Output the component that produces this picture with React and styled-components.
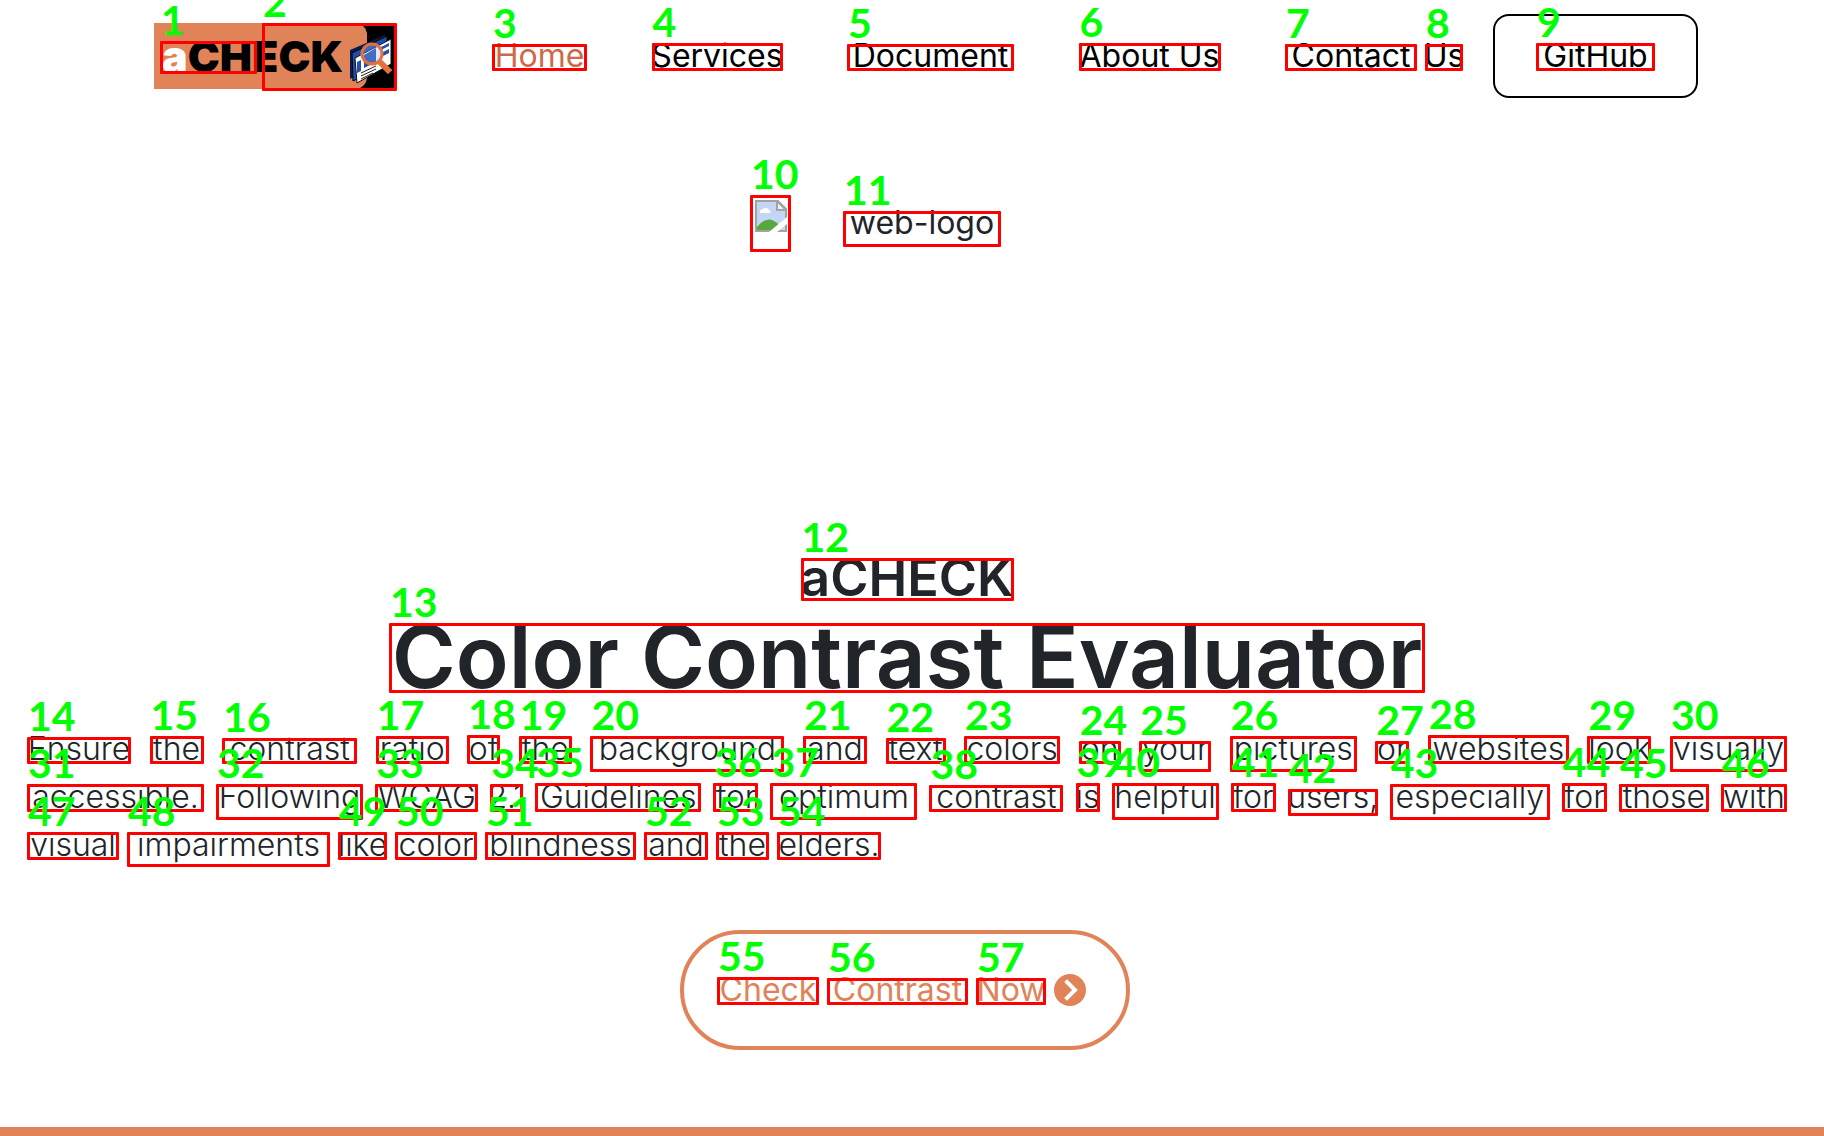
import React from "react";
import styled, { createGlobalStyle } from "styled-components";

const ORANGE = "#e08358";

const GlobalStyle = createGlobalStyle`
  * { box-sizing: border-box; }
  body {
    margin: 0;
    background: #ffffff;
    color: #212529;
    font-family: Inter, "Open Sans", sans-serif;
    font-size: 32px;
    line-height: 48px;
    overflow-x: hidden;
  }
  h1, h2, p { margin: 0; }
  a { color: inherit; text-decoration: none; }
`;

const Page = styled.div`
  display: flex;
  flex-direction: column;
`;

const Header = styled.header`
  display: flex;
  align-items: center;
  padding: 14px 126px 0 154px;
`;

const Logo = styled.a`
  position: relative;
  flex: none;
  display: flex;
  align-items: center;
  width: 242px;
  height: 66px;
  background: #000000;
`;

const LogoPlate = styled.span`
  display: flex;
  align-items: center;
  width: 213px;
  height: 100%;
  padding-left: 8px;
  border-radius: 0 12px 12px 0;
  background: ${ORANGE};
  color: #000000;
  font-size: 43px;
  font-weight: 900;
  white-space: nowrap;
`;

const LogoInitial = styled.span`
  color: #ffffff;
`;

const LogoArt = styled.svg`
  position: absolute;
  right: 4px;
  top: 12px;
  width: 44px;
  height: 50px;
`;

const Nav = styled.nav`
  flex: 1;
  display: flex;
  justify-content: space-between;
  margin: 0 30px 0 96px;
`;

const NavLink = styled.a`
  display: flex;
  gap: 8px;
  color: ${(p) => (p.$active ? "#cf6a48" : "#000000")};
`;

const GitHubButton = styled.button`
  display: flex;
  align-items: center;
  justify-content: center;
  width: 205px;
  height: 84px;
  padding: 0;
  border: 2px solid #000000;
  border-radius: 16px;
  background: transparent;
  color: #000000;
  font: inherit;
`;

const Main = styled.main`
  display: flex;
  flex-direction: column;
  align-items: center;
  padding: 101px 37px 77px 27px;
`;

const Banner = styled.div`
  display: flex;
  gap: 52px;
  width: 314px;
  height: 344px;
`;

const Subtitle = styled.h2`
  font-size: 52px;
  font-weight: 600;
  line-height: 70px;
`;

const Title = styled.h1`
  margin-bottom: 24px;
  font-size: 87px;
  font-weight: 600;
  line-height: 88px;
`;

const Intro = styled.p`
  align-self: stretch;
  font-weight: 300;
`;

const Line = styled.span`
  display: flex;
  justify-content: ${(p) => (p.$last ? "flex-start" : "space-between")};
  gap: ${(p) => (p.$last ? "8px" : "0")};
`;

const Word = styled.span`
  position: relative;
  display: flex;
  flex: none;
  justify-content: center;
  width: ${(p) => p.$w}px;
  white-space: nowrap;
`;

const Frame = styled.span`
  position: absolute;
  left: ${(p) => p.$left || 0}px;
  top: ${(p) => p.$top}px;
  width: ${(p) => (p.$w ? p.$w + "px" : "100%")};
  height: ${(p) => p.$h}px;
  border: 3px solid #ff0000;
  border-radius: 1px;
  z-index: 1;
`;

const Tag = styled.span`
  position: absolute;
  left: -2px;
  bottom: 100%;
  margin-bottom: 4px;
  color: #00ff00;
  font-family: Lato, sans-serif;
  font-size: 41px;
  font-weight: 700;
  line-height: 40px;
  white-space: nowrap;
`;

const Cta = styled.a`
  display: flex;
  align-items: center;
  gap: 8px;
  width: 450px;
  height: 120px;
  margin: 61px 4px 0 0;
  padding: 0 33px;
  border: 4px solid ${ORANGE};
  border-radius: 60px;
  color: ${ORANGE};
`;

const CtaIcon = styled.svg`
  flex: none;
  width: 32px;
  height: 32px;
`;

const BrokenIcon = styled.svg`
  width: 32px;
  height: 32px;
  margin-top: 1px;
`;

const Bar = styled.footer`
  height: 10px;
  background: ${ORANGE};
`;

function Marked({ n, w, top = 12, h = 28, children }) {
  return (
    <Word $w={w}>
      {children}
      <Frame $top={top} $h={h}>
        <Tag>{n}</Tag>
      </Frame>
    </Word>
  );
}

// [number, word, width, frame top, frame height]
const intro = [
  [
    [14, "Ensure", 104, 12, 27],
    [15, "the", 54, 11, 28],
    [16, "contrast", 135, 13, 26],
    [17, "ratio", 73, 11, 28],
    [18, "of", 33, 10, 29],
    [19, "the", 53, 11, 28],
    [20, "background", 194, 11, 36],
    [21, "and", 64, 11, 28],
    [22, "text", 60, 13, 26],
    [23, "colors", 96, 11, 28],
    [24, "on", 42, 16, 23],
    [25, "your", 72, 16, 31],
    [26, "pictures", 127, 11, 36],
    [27, "or", 34, 16, 23],
    [28, "websites", 141, 10, 29],
    [29, "look", 64, 11, 28],
    [30, "visually", 117, 11, 36],
  ],
  [
    [31, "accessible.", 177, 11, 28],
    [32, "Following", 147, 11, 36],
    [33, "WCAG", 103, 11, 28],
    [34, "2.1", 33, 11, 28],
    [35, "Guidelines", 166, 10, 29],
    [36, "for", 45, 10, 29],
    [37, "optimum", 147, 10, 37],
    [38, "contrast", 134, 12, 27],
    [39, "is", 24, 10, 29],
    [40, "helpful", 107, 10, 37],
    [41, "for", 45, 10, 29],
    [42, "users,", 90, 16, 27],
    [43, "especially", 160, 11, 36],
    [44, "for", 45, 10, 29],
    [45, "those", 90, 11, 28],
    [46, "with", 66, 11, 28],
  ],
  [
    [47, "visual", 92, 11, 28],
    [48, "impairments", 203, 11, 35],
    [49, "like", 49, 11, 28],
    [50, "color", 82, 11, 28],
    [51, "blindness", 151, 11, 28],
    [52, "and", 64, 11, 28],
    [53, "the", 53, 11, 28],
    [54, "elders.", 104, 11, 28],
  ],
];

export default function App() {
  return (
    <Page>
      <GlobalStyle />
      <Header>
        <Logo href="#home">
          <LogoPlate>
            <LogoInitial>a</LogoInitial>CHECK
          </LogoPlate>
          <LogoArt viewBox="0 0 44 50" aria-hidden="true">
            <path d="M2 15 L37 0 V28 L2 44 Z" fill="#0b1d4f" />
            <path d="M4 18 L39 1 V30 L5 46 Z" fill="#1d4fa8" stroke="#000" />
            <path d="M7 23 L43 4 V29 L9 48 Z" fill="#ffffff" stroke="#111" />
            <path d="M9 27 L13 25 V36 L9 38 Z M16 20 L28 13 V27 L16 33 Z M33 12 L41 8 V11 L33 15 Z M33 18 L41 14 V18 L33 22 Z" fill="#2450a5" />
            <path d="M13 38 L28 31 M13 41 L28 34 M13 44 L25 38" stroke="#222" strokeWidth="1" />
            <circle cx="24" cy="19" r="10" fill="#8fb0ff" fillOpacity=".3" stroke="#e5703d" strokeWidth="3" />
            <path d="M31 27 L34 30" stroke="#e5703d" strokeWidth="3" />
            <path d="M34 29 L40 35" stroke="#e5703d" strokeWidth="6" strokeLinecap="square" />
          </LogoArt>
          <Frame $left={6} $top={18} $w={97} $h={33}><Tag>1</Tag></Frame>
          <Frame $left={108} $top={0} $w={135} $h={68}><Tag>2</Tag></Frame>
        </Logo>
        <Nav>
          <NavLink href="#home" $active><Marked n={3} w={95} h={27}>Home</Marked></NavLink>
          <NavLink href="#services"><Marked n={4} w={131} top={11}>Services</Marked></NavLink>
          <NavLink href="#document"><Marked n={5} w={167} h={27}>Document</Marked></NavLink>
          <NavLink href="#about"><Marked n={6} w={142} top={11}>About Us</Marked></NavLink>
          <NavLink href="#contact">
            <Marked n={7} w={132} h={27}>Contact</Marked>
            <Marked n={8} w={38} h={27}>Us</Marked>
          </NavLink>
        </Nav>
        <GitHubButton type="button">
          <Marked n={9} w={119} top={11}>GitHub</Marked>
        </GitHubButton>
      </Header>

      <Main>
        <Banner>
          <Marked n={10} w={41} top={-4} h={57}>
            <BrokenIcon viewBox="0 0 32 32" aria-hidden="true">
              <path d="M1 1 H23 L31 9 V31 H1 Z" fill="#c5d5f5" stroke="#a3a3a3" strokeWidth="2" />
              <path d="M5 13 a3 3 0 0 1 3 -4 a4 4 0 0 1 6 1 a2 2 0 0 1 1 3 Z" fill="#fff" />
              <path d="M2 30 V27 Q13 13 24 25 L17 30 Z" fill="#59a83f" />
              <path d="M14 32 L32 17 V24 L22 32 Z" fill="#fff" />
              <path d="M22 1 V10 H31 Z" fill="#f4f4f4" stroke="#a3a3a3" strokeWidth="2" />
            </BrokenIcon>
          </Marked>
          <Marked n={11} w={158} h={36}>web-logo</Marked>
        </Banner>
        <Subtitle><Marked n={12} w={213} top={15} h={43}>aCHECK</Marked></Subtitle>
        <Title><Marked n={13} w={1036} top={10} h={70}>Color Contrast Evaluator</Marked></Title>
        <Intro>
          {intro.map((line, i) => (
            <Line key={i} $last={i === intro.length - 1}>
              {line.map(([n, text, w, top, h]) => (
                <Marked key={n} n={n} w={w} top={top} h={h}>{text}</Marked>
              ))}
            </Line>
          ))}
        </Intro>
        <Cta href="#check">
          <Marked n={55} w={102} top={11}>Check</Marked>
          <Marked n={56} w={141} h={27}>Contrast</Marked>
          <Marked n={57} w={70} h={27}>Now</Marked>
          <CtaIcon viewBox="0 0 32 32" aria-hidden="true">
            <circle cx="16" cy="16" r="16" fill={ORANGE} />
            <path d="M13 8 L21 16 L13 24" fill="none" stroke="#fff" strokeWidth="4" strokeLinecap="square" />
          </CtaIcon>
        </Cta>
      </Main>
      <Bar />
    </Page>
  );
}
